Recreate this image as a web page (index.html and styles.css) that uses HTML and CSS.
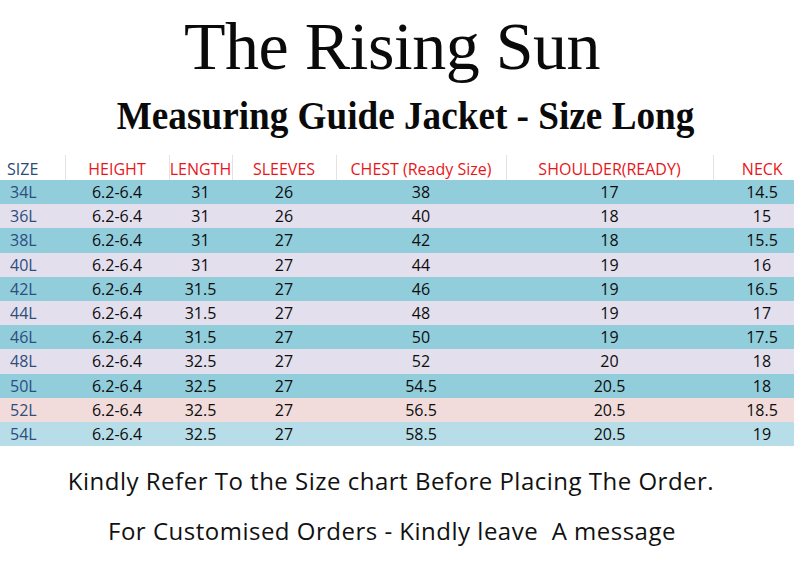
FILE: index.html
```html
<!DOCTYPE html>
<html>
<head>
<meta charset="utf-8">
<link rel="stylesheet" href="styles.css">
</head>
<body>
<div class="page">
  <h1 class="title">The Rising Sun</h1>
  <h2 class="subtitle"><span class="subtitle-text">Measuring Guide Jacket - Size Long</span></h2>
  <table class="chart">
    <colgroup>
      <col class="c-size"><col class="c-height"><col class="c-length"><col class="c-sleeves"><col class="c-chest"><col class="c-shoulder"><col class="c-neck">
    </colgroup>
    <thead>
      <tr>
        <th class="size">SIZE</th>
        <th>HEIGHT</th>
        <th>LENGTH</th>
        <th>SLEEVES</th>
        <th>CHEST (Ready Size)</th>
        <th>SHOULDER(READY)</th>
        <th class="neck">NECK</th>
      </tr>
    </thead>
    <tbody>
      <tr class="blue"><td class="size">34L</td><td>6.2-6.4</td><td>31</td><td>26</td><td>38</td><td>17</td><td class="neck">14.5</td></tr>
      <tr class="lav"><td class="size">36L</td><td>6.2-6.4</td><td>31</td><td>26</td><td>40</td><td>18</td><td class="neck">15</td></tr>
      <tr class="blue"><td class="size">38L</td><td>6.2-6.4</td><td>31</td><td>27</td><td>42</td><td>18</td><td class="neck">15.5</td></tr>
      <tr class="lav"><td class="size">40L</td><td>6.2-6.4</td><td>31</td><td>27</td><td>44</td><td>19</td><td class="neck">16</td></tr>
      <tr class="blue"><td class="size">42L</td><td>6.2-6.4</td><td>31.5</td><td>27</td><td>46</td><td>19</td><td class="neck">16.5</td></tr>
      <tr class="lav"><td class="size">44L</td><td>6.2-6.4</td><td>31.5</td><td>27</td><td>48</td><td>19</td><td class="neck">17</td></tr>
      <tr class="blue"><td class="size">46L</td><td>6.2-6.4</td><td>31.5</td><td>27</td><td>50</td><td>19</td><td class="neck">17.5</td></tr>
      <tr class="lav"><td class="size">48L</td><td>6.2-6.4</td><td>32.5</td><td>27</td><td>52</td><td>20</td><td class="neck">18</td></tr>
      <tr class="blue"><td class="size">50L</td><td>6.2-6.4</td><td>32.5</td><td>27</td><td>54.5</td><td>20.5</td><td class="neck">18</td></tr>
      <tr class="pink"><td class="size">52L</td><td>6.2-6.4</td><td>32.5</td><td>27</td><td>56.5</td><td>20.5</td><td class="neck">18.5</td></tr>
      <tr class="light"><td class="size">54L</td><td>6.2-6.4</td><td>32.5</td><td>27</td><td>58.5</td><td>20.5</td><td class="neck">19</td></tr>
    </tbody>
  </table>
  <p class="note note-first">Kindly Refer To the Size chart Before Placing The Order.</p>
  <p class="note note-second">For Customised Orders - Kindly leave&nbsp; A message</p>
</div>
</body>
</html>
```

FILE: styles.css
```css
html, body {
  margin: 0;
  padding: 0;
  background: #ffffff;
}

.page {
  width: 794px;
  height: 567px;
  overflow: hidden;
  display: flex;
  flex-direction: column;
}

.title {
  margin: 8px 0 0 0;
  padding-right: 10px;
  font-family: "Liberation Serif", "Times New Roman", serif;
  font-weight: 400;
  font-size: 68px;
  line-height: 76px;
  letter-spacing: -0.5px;
  text-align: center;
  color: #0a0a0a;
}

.subtitle {
  margin: 10px 0 0 0;
  padding-left: 18px;
  font-family: "Liberation Serif", "Times New Roman", serif;
  font-weight: 700;
  font-size: 40px;
  line-height: 44px;
  text-align: center;
  color: #0a0a0a;
}

.subtitle-text {
  display: inline-block;
  transform: scaleX(0.93);
}

.chart {
  margin-top: 17px;
  width: 794px;
  border-collapse: collapse;
  table-layout: fixed;
  font-family: "Open Sans", "Noto Sans", sans-serif;
  font-size: 16px;
}

.c-size { width: 65px; }
.c-height { width: 104px; }
.c-length { width: 63px; }
.c-sleeves { width: 104px; }
.c-chest { width: 170px; }
.c-shoulder { width: 207px; }
.c-neck { width: 81px; }

.chart th {
  height: 25px;
  padding: 0;
  font-weight: 400;
  color: #e8161b;
  text-align: center;
  vertical-align: bottom;
  line-height: 22px;
  border-left: 1px solid #e3e3e3;
  white-space: nowrap;
}

.chart th.size {
  border-left: none;
  text-align: left;
  padding-left: 7px;
  color: #2a4a78;
}

.chart td {
  height: 24px;
  padding: 0;
  text-align: center;
  color: #0d0d0d;
  line-height: 24px;
}

.chart tbody tr {
  height: 24.2px;
}

.chart td.size {
  text-align: left;
  padding-left: 10px;
  color: #2d4d7c;
}

.chart .neck {
  padding-left: 17px;
}

.blue { background: #92cddc; }
.lav { background: #e4dfec; }
.pink { background: #f2dcdb; }
.light { background: #b7dee8; }

.note {
  margin: 0;
  font-family: "Open Sans", "Noto Sans", sans-serif;
  font-size: 24px;
  line-height: 30px;
  letter-spacing: 0.5px;
  text-align: center;
  color: #111111;
}

.note-first {
  margin-top: 20px;
  padding-right: 12px;
}

.note-second {
  margin-top: 20px;
  padding-right: 10px;
}
```
